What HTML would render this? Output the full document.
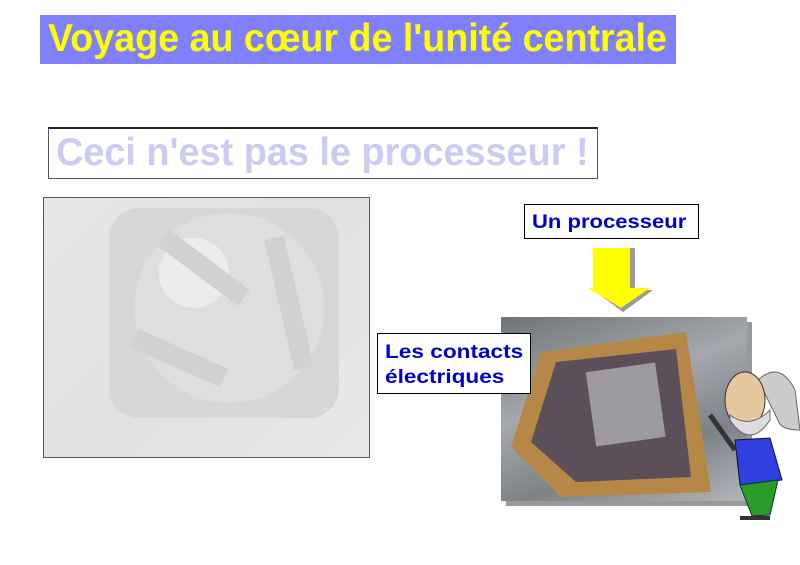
<!DOCTYPE html>
<html><head><meta charset="utf-8"><style>
body{margin:0;width:800px;height:565px;background:#fff;position:relative;overflow:hidden;font-family:"Liberation Sans",sans-serif}
.a{position:absolute}
.t{font-weight:bold;white-space:nowrap;transform-origin:0 0}
</style></head><body>
<div class="a" style="left:40px;top:15px;width:636px;height:49px;background:#8080ff"></div>
<div class="a t" style="left:48px;top:17px;font-size:39px;color:#ffff00;transform:scaleX(0.965)">Voyage au cœur de l'unité centrale</div>
<div class="a" style="left:48px;top:127px;width:548px;height:49px;border:1px solid #556;border-top:2px solid #222;background:#fff"></div>
<div class="a t" style="left:56px;top:131px;font-size:39px;color:#ccccf2;transform:scaleX(0.97)">Ceci n'est pas le processeur !</div>
<div class="a" style="left:43px;top:197px;width:325px;height:259px;border:1px solid #557;background:linear-gradient(135deg,#e6e8e6,#dfe2df 50%,#e8eae8)">
<svg width="325" height="259"><rect x="65" y="10" width="230" height="210" rx="30" fill="#d5d8d5"/><circle cx="185" cy="110" r="95" fill="#dcdfdc"/><circle cx="150" cy="75" r="35" fill="#ececec"/><path d="M120,40 L200,100 M90,140 L180,180 M230,40 L260,170" stroke="#cfd2cf" stroke-width="20"/></svg></div>
<div class="a" style="left:524px;top:204px;width:173px;height:33px;border:1.5px solid #000;background:#fff"></div>
<div class="a t" style="left:532px;top:212px;font-size:19px;color:#0000c8;transform:scaleX(1.16)">Un processeur</div>
<svg class="a" style="left:585px;top:246px" width="75" height="70"><polygon points="12,2 50,2 50,44 68,44 38,66 8,44 12,44" fill="#999"/><polygon points="8,2 45,2 45,42 65,42 36,62 3,42 8,42" fill="#ffff00"/></svg>
<div class="a" style="left:506px;top:322px;width:246px;height:184px;background:#999"></div>
<div class="a" style="left:501px;top:317px;width:246px;height:184px;background:linear-gradient(160deg,#6f7478,#a5a9ad 40%,#7e8286 70%,#b3b6b9)">
<svg width="246" height="184"><polygon points="40,35 185,15 210,175 60,180 10,130" fill="#b68848"/><polygon points="55,45 175,32 190,160 75,165 30,125" fill="#5b5058"/><rect x="90" y="50" width="70" height="75" fill="#9c9aa0" transform="rotate(-8 125 90)"/></svg></div>
<div class="a" style="left:377px;top:333px;width:152px;height:59px;border:1.5px solid #000;background:#fff"></div>
<div class="a t" style="left:385px;top:340px;font-size:19px;line-height:25px;color:#0000c8;transform:scaleX(1.19)">Les contacts<br>électriques</div>
<svg class="a" style="left:700px;top:360px" width="100" height="170"><path d="M58,20 Q80,0 95,30 L100,70 Q80,70 78,60 Z" fill="#ccc" stroke="#666"/><ellipse cx="45" cy="40" rx="20" ry="28" fill="#e6c7a0" stroke="#333"/><path d="M30,60 Q50,90 70,60 L70,50 Q50,70 30,55Z" fill="#ddd" stroke="#666"/><path d="M35,80 L70,78 L82,120 L40,125Z" fill="#2f3fe0" stroke="#113"/><path d="M40,125 L78,120 L70,155 L52,156Z" fill="#2a9a2a" stroke="#133"/><path d="M10,55 L35,90" stroke="#333" stroke-width="5"/><path d="M40,158 L70,158" stroke="#333" stroke-width="4"/></svg>
</body></html>
